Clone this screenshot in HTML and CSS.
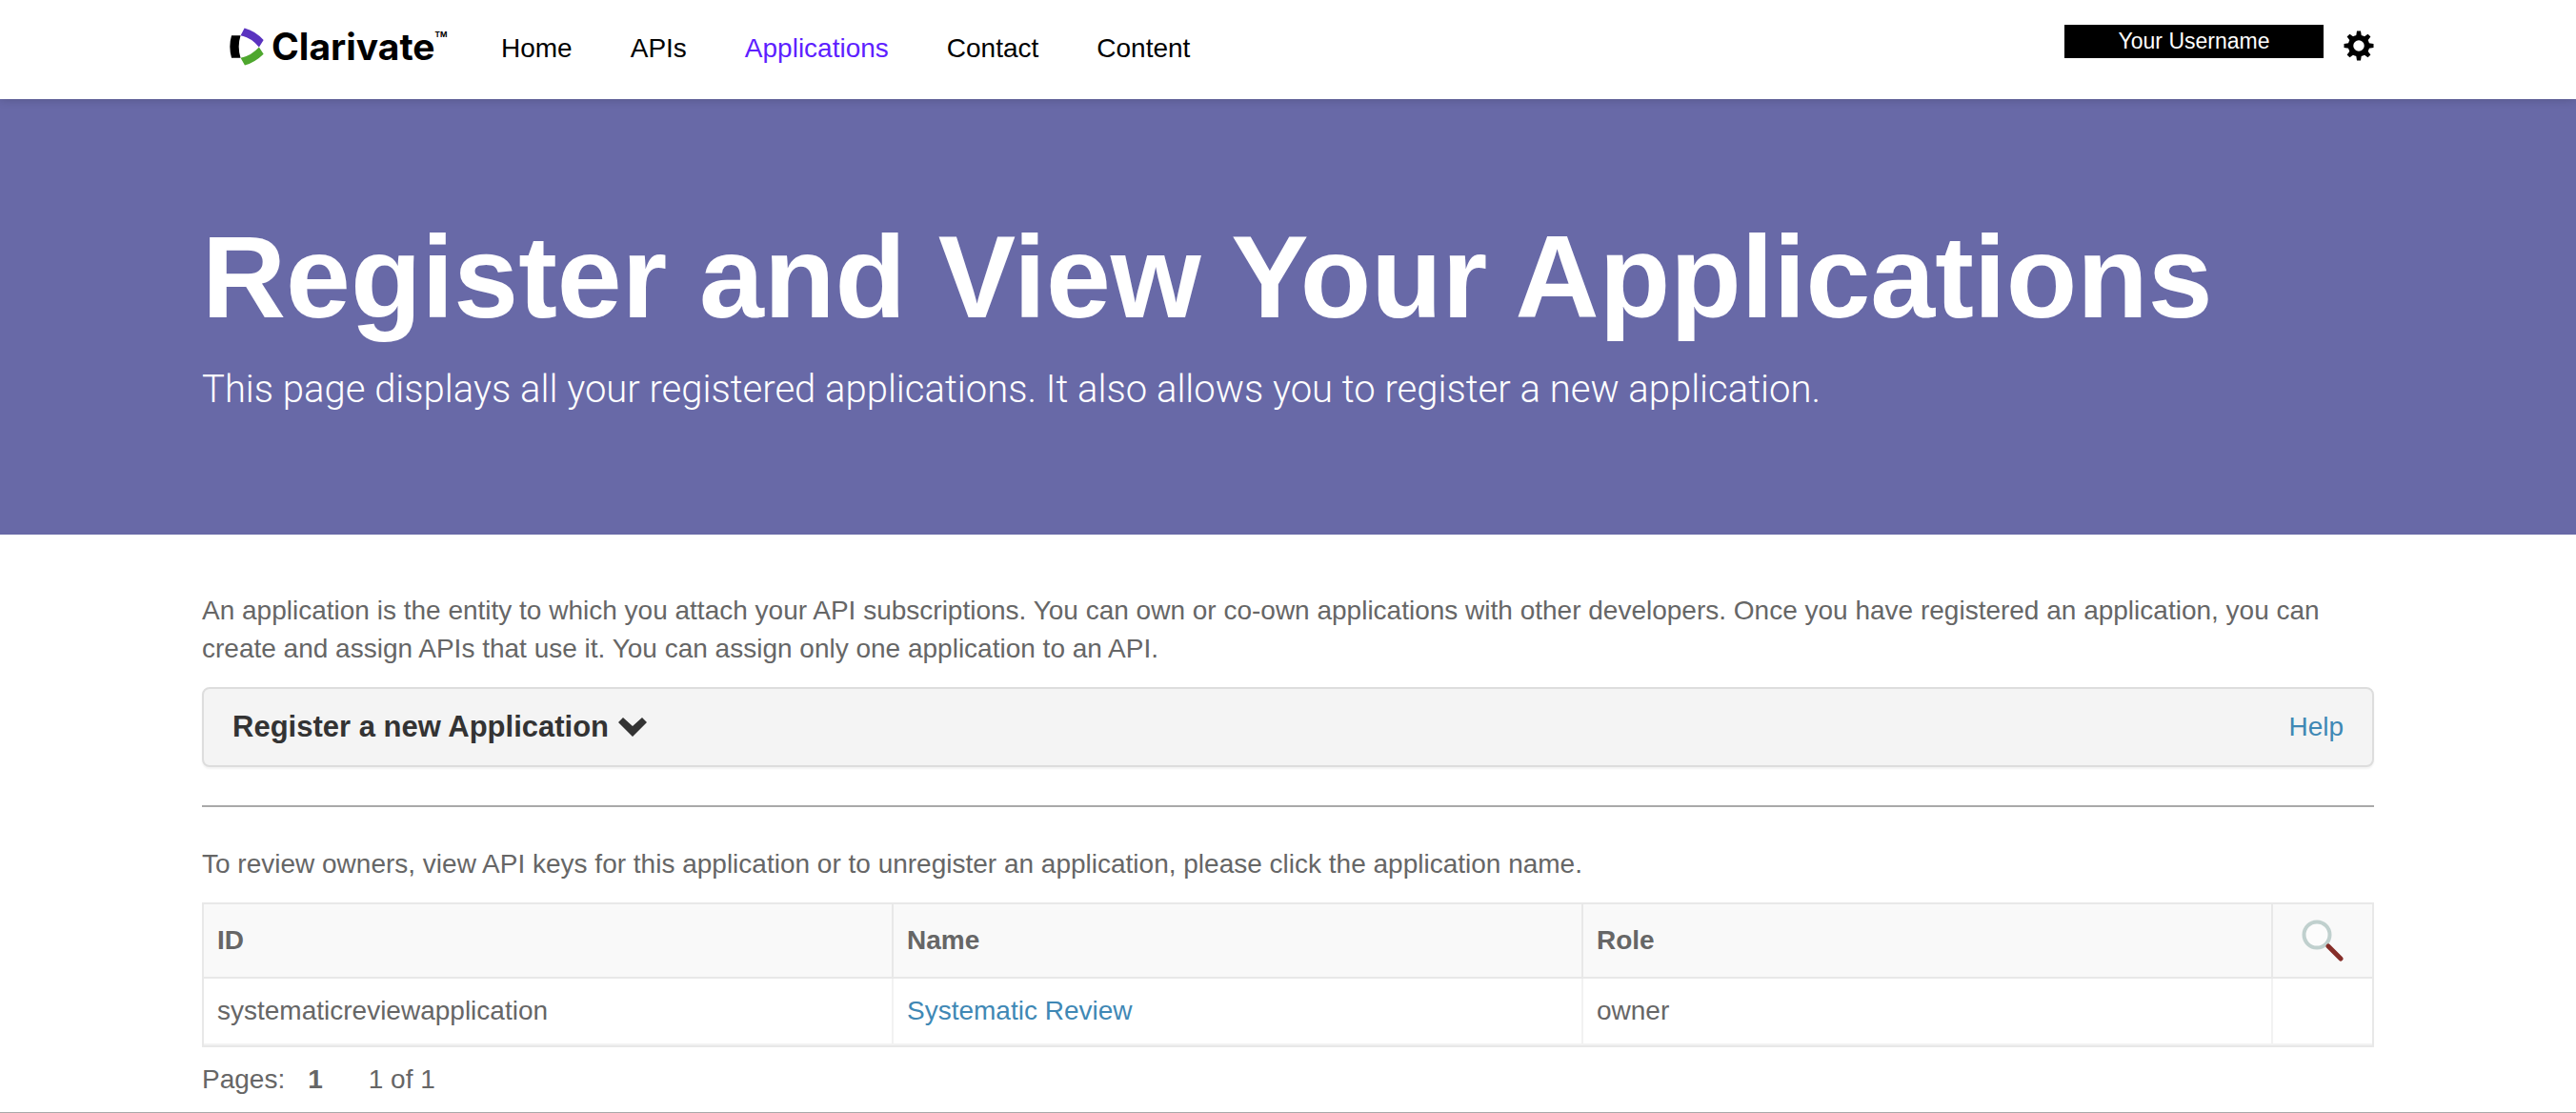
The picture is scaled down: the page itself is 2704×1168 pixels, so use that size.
FILE: index.html
```html
<!DOCTYPE html>
<html lang="en">
<head>
<meta charset="utf-8">
<meta name="viewport" content="width=device-width, initial-scale=1">
<title>Applications</title>
<link rel="stylesheet" href="styles.css">
</head>
<body>
<header class="site-header">
  <div class="container header-row">
    <a class="brand" href="#">
      <svg class="brand-mark" viewBox="34 28 106 117" aria-hidden="true">
        <path fill="#000" d="M40 52H68Q57 86 68 121H40Q30 86 40 52Z"/>
        <path fill="#5a33bf" d="M80 29Q114 38 139 66L125 88Q100 58 68 52Z"/>
        <path fill="#4ea72e" d="M125 88L139 109Q112 135 81 144L68 121Q100 115 125 88Z"/>
      </svg>
      <span class="brand-name">Clarivate</span><span class="brand-tm">TM</span>
    </a>
    <nav class="main-nav">
      <a href="#">Home</a>
      <a href="#">APIs</a>
      <a href="#" class="active" aria-current="page">Applications</a>
      <a href="#">Contact</a>
      <a href="#">Content</a>
    </nav>
    <div class="account">
      <span class="username">Your Username</span>
      <button class="icon-button" type="button" aria-label="Settings">
        <svg class="gear" viewBox="-16 -16 32 32" aria-hidden="true">
          <g fill="#000">
            <path id="tooth" d="M-3 -9L-2 -15.5H2L3 -9Z"/>
            <use href="#tooth" transform="rotate(45)"/>
            <use href="#tooth" transform="rotate(90)"/>
            <use href="#tooth" transform="rotate(135)"/>
            <use href="#tooth" transform="rotate(180)"/>
            <use href="#tooth" transform="rotate(225)"/>
            <use href="#tooth" transform="rotate(270)"/>
            <use href="#tooth" transform="rotate(315)"/>
          </g>
          <circle r="8.5" fill="none" stroke="#000" stroke-width="5.5"/>
        </svg>
      </button>
    </div>
  </div>
</header>

<section class="hero">
  <div class="container">
    <h1>Register and View Your Applications</h1>
    <p class="lead">This page displays all your registered applications. It also allows you to register a new application.</p>
  </div>
</section>

<main class="container content">
  <p>An application is the entity to which you attach your API subscriptions. You can own or co-own applications with other developers. Once you have registered an application, you can create and assign APIs that use it. You can assign only one application to an API.</p>

  <div class="panel">
    <h2>
      <button class="panel-toggle" type="button" aria-expanded="false">
        Register a new Application
        <svg class="chevron" viewBox="0 0 30 20" aria-hidden="true"><path fill="#333" d="M0 5L5 0L15 9L25 0L30 5L15 20Z"/></svg>
      </button>
    </h2>
    <a class="link" href="#">Help</a>
  </div>

  <hr>

  <p>To review owners, view API keys for this application or to unregister an application, please click the application name.</p>

  <table class="apps">
    <colgroup><col><col><col><col class="col-search"></colgroup>
    <thead>
      <tr>
        <th scope="col">ID</th>
        <th scope="col">Name</th>
        <th scope="col">Role</th>
        <th scope="col" class="search-cell">
          <button class="icon-button" type="button" aria-label="Search">
            <svg class="magnifier" viewBox="0 0 44 44" aria-hidden="true">
              <circle cx="16" cy="16" r="13.5" fill="#fcfcfc" stroke="#c0d0ce" stroke-width="4"/>
              <path d="M28 28L41 41" stroke="#862e29" stroke-width="5" stroke-linecap="round"/>
            </svg>
          </button>
        </th>
      </tr>
    </thead>
    <tbody>
      <tr>
        <td>systematicreviewapplication</td>
        <td><a class="link" href="#">Systematic Review</a></td>
        <td>owner</td>
        <td></td>
      </tr>
    </tbody>
  </table>

  <div class="pager">
    <span>Pages:</span>
    <strong>1</strong>
    <span class="pager-count">1 of 1</span>
  </div>
</main>
<footer class="site-footer"></footer>
</body>
</html>
```
FILE: styles.css
```css
* { box-sizing: border-box; }

body {
  margin: 0;
  background: #fff;
  color: #666;
  font-family: "Liberation Sans", Arial, sans-serif;
  font-size: 28px;
  line-height: 40px;
}

a { text-decoration: none; }

button {
  margin: 0;
  padding: 0;
  border: 0;
  background: none;
  color: inherit;
  font: inherit;
  cursor: pointer;
}

svg { display: block; }

.container {
  max-width: 2280px;
  margin: 0 auto;
}

.site-header {
  position: relative;
  background: #fff;
  box-shadow: 0 0 10px rgba(0, 0, 0, 0.2);
}

.header-row {
  display: flex;
  align-items: flex-start;
  height: 104px;
  padding-left: 29px;
}

.brand {
  display: flex;
  align-items: flex-start;
  width: 285px;
  padding-top: 29px;
  color: #000;
}

.brand-mark { width: 36px; height: 40px; }

.brand-name {
  margin-left: 8px;
  font-family: Inter, sans-serif;
  font-size: 39px;
  font-weight: 700;
}

.brand-tm {
  font-family: Inter, sans-serif;
  font-size: 8px;
  font-weight: 700;
  line-height: 14px;
}

.main-nav {
  display: flex;
  gap: 61px;
  padding-top: 31px;
}

.main-nav a { color: #000; }
.main-nav .active { color: #5e1fff; }

.account {
  display: flex;
  align-items: flex-start;
  gap: 21px;
  margin-left: auto;
  padding-top: 26px;
}

.username {
  width: 272px;
  height: 35px;
  background: #000;
  color: #fff;
  font-size: 23px;
  line-height: 34px;
  text-align: center;
}

.account .icon-button { padding-top: 6px; }
.gear { width: 32px; height: 32px; }

.hero {
  padding: 115px 0 122px;
  background: #6869a7;
  color: #fff;
}

.hero h1 {
  margin: 0;
  font-size: 122px;
  font-weight: 700;
  line-height: 144px;
}

.hero .lead {
  margin: 16px 0 0;
  font-family: Roboto, sans-serif;
  font-size: 40px;
  font-weight: 300;
  line-height: 60px;
}

.content { padding-top: 60px; }

.content p { margin: 0 0 20px; }

.panel {
  display: flex;
  align-items: center;
  justify-content: space-between;
  height: 84px;
  padding: 0 30px;
  border: 2px solid #ddd;
  border-radius: 8px;
  background: #f4f4f4;
  box-shadow: 0 2px 2px rgba(0, 0, 0, 0.05);
}

.panel h2 {
  margin: 0;
  color: #333;
  font-size: 31px;
  font-weight: 700;
}

.panel-toggle {
  display: flex;
  align-items: center;
  gap: 10px;
}

.chevron { width: 30px; height: 20px; }

.link { color: #3f88b5; }

hr {
  height: 2px;
  margin: 40px 0;
  border: 0;
  background: #a9a9a9;
}

.apps {
  width: 100%;
  table-layout: fixed;
  border: 2px solid #e8e8e8;
  border-spacing: 0;
}

.col-search { width: 104px; }

.apps th,
.apps td {
  padding: 14px;
  border-right: 2px solid #f2f2f2;
  border-bottom: 2px solid #f2f2f2;
  text-align: left;
}

.apps th {
  padding: 18px 14px;
  border-color: #e8e8e8;
  background: #f9f9f9;
}

.apps th:last-child,
.apps td:last-child { border-right: 0; }

.apps .search-cell {
  padding: 0;
  text-align: center;
}

.search-cell .icon-button { vertical-align: middle; }
.magnifier { width: 44px; height: 44px; }

.pager {
  display: flex;
  padding: 14px 0;
}

.pager strong { margin-left: 24px; }
.pager-count { margin-left: 48px; }

.site-footer { border-top: 2px solid #a9a9a9; }
```
